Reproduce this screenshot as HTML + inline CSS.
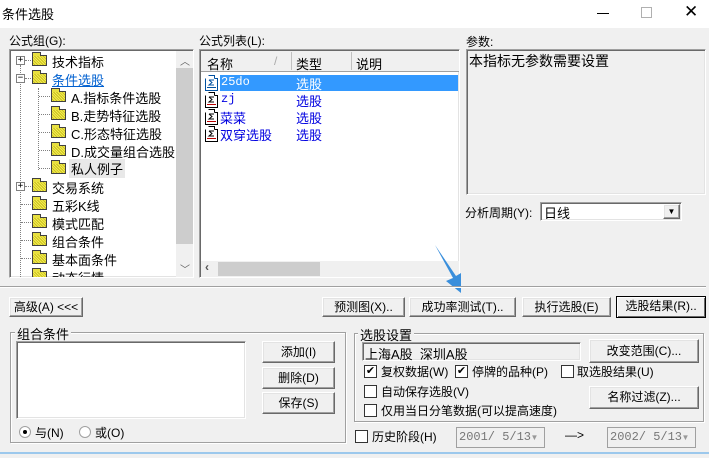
<!DOCTYPE html><html><head><meta charset="utf-8"><style>
*{box-sizing:border-box;margin:0;padding:0}
body{width:709px;height:458px;background:#f0f0f0;position:relative;overflow:hidden;font-family:"Liberation Sans","Noto Sans CJK SC","WenQuanYi Zen Hei",sans-serif;font-size:12px;color:#000}
.a{position:absolute;white-space:nowrap}
.sunk{position:absolute;background:#fff;border:1px solid;border-color:#a0a0a0 #fff #fff #a0a0a0;box-shadow:inset 1px 1px 0 #696969,inset -1px -1px 0 #e3e3e3}
.btn{position:absolute;background:#f0f0f0;border:1px solid;border-color:#fff #696969 #696969 #fff;box-shadow:inset -1px -1px 0 #a0a0a0,inset 1px 1px 0 #e3e3e3;text-align:center;font-size:12px;line-height:18px}
.grp{position:absolute;border:1px solid #a0a0a0;box-shadow:1px 1px 0 #fff inset,1px 1px 0 #fff}
.grp span{position:absolute;top:-9px;left:6px;background:#f0f0f0;padding:0 2px;font-size:13px}
.fold{position:absolute;width:15px;height:11px;border:1px solid #404040;background:#e8e040;background-image:repeating-linear-gradient(45deg,#f4ec50 0 1px,#c8c020 1px 2px)}
.fold:before{content:"";position:absolute;left:-1px;top:-4px;width:7px;height:3px;border:1px solid #404040;border-bottom:none;background:#e8e040}
.tree .t{position:absolute;font-size:13px}
.pm{position:absolute;width:9px;height:9px;border:1px solid #808080;background:#fff;font-size:9px;line-height:7px;text-align:center;font-family:"DejaVu Sans Mono",monospace}
.cb{position:absolute;width:13px;height:13px;border:1px solid #333;background:#fff;font-size:11px;line-height:11px;text-align:center}
svg.ic{position:absolute}
.blue{color:#0000e0}
.dl{position:absolute;border-left:1px dotted #808080}
.dh{position:absolute;border-top:1px dotted #808080}
</style></head><body>
<div class="a" style="left:0;top:0;width:709px;height:28px;background:#fff"></div>
<div class="a" style="left:2px;top:4px;font-size:13px">条件选股</div>
<div class="a" style="left:597px;top:13px;width:12px;height:1px;background:#000"></div>
<div class="a" style="left:641px;top:7px;width:11px;height:11px;border:1px solid #b0b0b0"></div>
<div class="a" style="left:684px;top:2px;font-size:17px;font-family:'DejaVu Sans';font-weight:200">✕</div>

<div class="a" style="left:9px;top:32px;font-size:12px">公式组(G):</div>
<div class="sunk tree" style="left:9px;top:49px;width:185px;height:229px;overflow:hidden">
 <div class="dl" style="left:10px;top:15px;height:220px"></div>
 <div class="dl" style="left:28px;top:38px;height:82px"></div>
 <div class="pm" style="left:6px;top:6px">+</div><div class="dh" style="left:15px;top:10px;width:6px"></div>
 <div class="fold" style="left:22px;top:5px"></div><div class="t" style="left:42px;top:2px">技术指标</div>
 <div class="pm" style="left:6px;top:24px">−</div><div class="dh" style="left:15px;top:28px;width:6px"></div>
 <div class="fold" style="left:22px;top:23px"></div><div class="t" style="left:42px;top:20px;color:#0060d0;text-decoration:underline">条件选股</div>
 <div class="dh" style="left:29px;top:46px;width:11px"></div><div class="fold" style="left:41px;top:41px"></div><div class="t" style="left:61px;top:38px">A.指标条件选股</div>
 <div class="dh" style="left:29px;top:64px;width:11px"></div><div class="fold" style="left:41px;top:59px"></div><div class="t" style="left:61px;top:56px">B.走势特征选股</div>
 <div class="dh" style="left:29px;top:82px;width:11px"></div><div class="fold" style="left:41px;top:77px"></div><div class="t" style="left:61px;top:74px">C.形态特征选股</div>
 <div class="dh" style="left:29px;top:100px;width:11px"></div><div class="fold" style="left:41px;top:95px"></div><div class="t" style="left:61px;top:92px">D.成交量组合选股</div>
 <div class="dh" style="left:29px;top:118px;width:11px"></div><div class="fold" style="left:41px;top:113px"></div><div class="t" style="left:59px;top:109px;background:#e8e8e8;padding:0 2px">私人例子</div>
 <div class="pm" style="left:6px;top:132px">+</div><div class="dh" style="left:15px;top:136px;width:6px"></div>
 <div class="fold" style="left:22px;top:131px"></div><div class="t" style="left:42px;top:128px">交易系统</div>
 <div class="dh" style="left:11px;top:154px;width:10px"></div><div class="fold" style="left:22px;top:149px"></div><div class="t" style="left:42px;top:146px">五彩K线</div>
 <div class="dh" style="left:11px;top:172px;width:10px"></div><div class="fold" style="left:22px;top:167px"></div><div class="t" style="left:42px;top:164px">模式匹配</div>
 <div class="dh" style="left:11px;top:190px;width:10px"></div><div class="fold" style="left:22px;top:185px"></div><div class="t" style="left:42px;top:182px">组合条件</div>
 <div class="dh" style="left:11px;top:208px;width:10px"></div><div class="fold" style="left:22px;top:203px"></div><div class="t" style="left:42px;top:200px">基本面条件</div>
 <div class="fold" style="left:22px;top:221px"></div><div class="t" style="left:42px;top:218px">动态行情</div>
 <div class="a" style="left:166px;top:1px;width:17px;height:226px;background:#f0f0f0"></div>
 <div class="a" style="left:166px;top:18px;width:17px;height:176px;background:#cdcdcd"></div>
 <div class="a" style="left:170px;top:3px;font-size:10px;color:#606060">︿</div>
 <div class="a" style="left:170px;top:211px;font-size:10px;color:#606060">﹀</div>
</div>

<div class="a" style="left:199px;top:32px">公式列表(L):</div>
<div class="sunk" style="left:199px;top:49px;width:261px;height:229px;overflow:hidden">
 <div class="a" style="left:1px;top:1px;width:258px;height:21px;background:#f0f0f0;border-bottom:1px solid #a0a0a0"></div>
 <div class="a" style="left:7px;top:4px;font-size:13px">名称</div>
 <div class="a" style="left:74px;top:4px;color:#aaa">/</div>
 <div class="a" style="left:91px;top:2px;width:1px;height:18px;background:#c0c0c0"></div>
 <div class="a" style="left:96px;top:4px;font-size:13px">类型</div>
 <div class="a" style="left:151px;top:2px;width:1px;height:18px;background:#c0c0c0"></div>
 <div class="a" style="left:156px;top:4px;font-size:13px">说明</div>
 <div class="a" style="left:20px;top:25px;width:238px;height:16px;background:#3399ff"></div>
 <svg class="ic" style="left:4px;top:25px" width="15" height="16"><path d="M4.5 0.5h6v3M1.5 3.5v12h12v-12h-3M5 5h5M5 5l3 2.5L5 10h5" fill="none" stroke="#0050a0"/><path d="M3 12.5h9" stroke="#0050a0"/></svg>
 <div class="a" style="left:21px;top:25px;color:#fff;font-family:'Liberation Mono';font-size:12px">25do</div>
 <div class="a" style="left:96px;top:24px;color:#fff;font-size:13px">选股</div>
 <svg class="ic" style="left:4px;top:42px" width="15" height="16"><path d="M4.5 0.5h6v3M1.5 3.5v12h12v-12h-3M5 5h5M5 5l3 2.5L5 10h5" fill="none" stroke="#000"/><path d="M3 12.5h9" stroke="#b00"/></svg>
 <div class="a blue" style="left:21px;top:42px;font-family:'Liberation Mono'">zj</div><div class="a blue" style="left:96px;top:41px;font-size:13px">选股</div>
 <svg class="ic" style="left:4px;top:59px" width="15" height="16"><path d="M4.5 0.5h6v3M1.5 3.5v12h12v-12h-3M5 5h5M5 5l3 2.5L5 10h5" fill="none" stroke="#000"/><path d="M3 12.5h9" stroke="#b00"/></svg>
 <div class="a blue" style="left:20px;top:58px;font-size:13px">菜菜</div><div class="a blue" style="left:96px;top:58px;font-size:13px">选股</div>
 <svg class="ic" style="left:4px;top:76px" width="15" height="16"><path d="M4.5 0.5h6v3M1.5 3.5v12h12v-12h-3M5 5h5M5 5l3 2.5L5 10h5" fill="none" stroke="#000"/><path d="M3 12.5h9" stroke="#b00"/></svg>
 <div class="a blue" style="left:20px;top:75px;font-size:13px">双穿选股</div><div class="a blue" style="left:96px;top:75px;font-size:13px">选股</div>
 <div class="a" style="left:1px;top:211px;width:258px;height:16px;background:#f0f0f0"></div>
 <div class="a" style="left:18px;top:212px;width:102px;height:14px;background:#cdcdcd"></div>
 <div class="a" style="left:5px;top:210px;color:#555;font-weight:bold">‹</div>
</div>

<div class="a" style="left:466px;top:33px">参数:</div>
<div class="sunk" style="left:466px;top:49px;width:240px;height:146px;background:#f0f0f0">
 <div class="a" style="left:2px;top:1px;font-size:14px">本指标无参数需要设置</div>
</div>
<div class="a" style="left:465px;top:204px">分析周期(Y):</div>
<div class="sunk" style="left:540px;top:202px;width:142px;height:19px">
 <div class="a" style="left:3px;top:0px;font-size:13px">日线</div>
 <div class="btn" style="left:122px;top:1px;width:17px;height:15px;font-size:8px;line-height:13px">▼</div>
</div>

<svg class="a" style="left:430px;top:242px" width="40" height="52"><path d="M5 3 L23 36 L16 39 L31 51 L31 31 L26 34 Z" fill="#3a8fdc"/></svg>
<div class="a" style="left:0;top:286px;width:706px;height:1px;background:#a0a0a0"></div>
<div class="a" style="left:0;top:287px;width:706px;height:1px;background:#fff"></div>

<div class="btn" style="left:9px;top:297px;width:74px;height:20px">高级(A) &lt;&lt;&lt;</div>
<div class="btn" style="left:322px;top:297px;width:83px;height:20px">预测图(X)..</div>
<div class="btn" style="left:409px;top:297px;width:107px;height:20px">成功率测试(T)..</div>
<div class="btn" style="left:522px;top:297px;width:89px;height:20px">执行选股(E)</div>
<div class="btn" style="left:616px;top:296px;width:90px;height:22px;border:1px solid #000;box-shadow:inset 1px 1px 0 #fff,inset -1px -1px 0 #696969">选股结果(R)..</div>

<div class="grp" style="left:10px;top:332px;width:336px;height:111px"><span style="left:4px">组合条件</span></div>
<div class="sunk" style="left:16px;top:341px;width:230px;height:78px"></div>
<div class="btn" style="left:262px;top:341px;width:73px;height:22px;line-height:20px">添加(I)</div>
<div class="btn" style="left:262px;top:367px;width:73px;height:22px;line-height:20px">删除(D)</div>
<div class="btn" style="left:262px;top:392px;width:73px;height:22px;line-height:20px">保存(S)</div>
<div class="a" style="left:19px;top:426px;width:12px;height:12px;border-radius:50%;background:#fff;border:1px solid #a0a0a0"></div>
<div class="a" style="left:23px;top:430px;width:4px;height:4px;border-radius:50%;background:#000"></div>
<div class="a" style="left:35px;top:424px">与(N)</div>
<div class="a" style="left:79px;top:426px;width:12px;height:12px;border-radius:50%;background:#fff;border:1px solid #a0a0a0"></div>
<div class="a" style="left:95px;top:424px">或(O)</div>

<div class="grp" style="left:354px;top:333px;width:350px;height:89px"><span style="left:3px">选股设置</span></div>
<div class="sunk" style="left:362px;top:342px;width:219px;height:19px;background:#f0f0f0"><div class="a" style="left:2px;top:1px;font-size:13px">上海A股&nbsp;&nbsp;深圳A股</div></div>
<div class="btn" style="left:589px;top:339px;width:110px;height:24px;line-height:22px">改变范围(C)...</div>
<div class="cb" style="left:364px;top:365px">✔</div><div class="a" style="left:381px;top:363px">复权数据(W)</div>
<div class="cb" style="left:455px;top:365px">✔</div><div class="a" style="left:472px;top:363px">停牌的品种(P)</div>
<div class="cb" style="left:561px;top:365px"></div><div class="a" style="left:577px;top:363px">取选股结果(U)</div>
<div class="cb" style="left:364px;top:385px"></div><div class="a" style="left:381px;top:383px">自动保存选股(V)</div>
<div class="btn" style="left:589px;top:386px;width:110px;height:23px;line-height:21px">名称过滤(Z)...</div>
<div class="cb" style="left:364px;top:404px"></div><div class="a" style="left:381px;top:402px">仅用当日分笔数据(可以提高速度)</div>

<div class="cb" style="left:355px;top:430px"></div><div class="a" style="left:372px;top:428px">历史阶段(H)</div>
<div class="a" style="left:456px;top:427px;width:89px;height:21px;border:1px solid #a0a0a0;background:#f0f0f0;color:#777;padding:2px 2px;font-family:'Liberation Mono';font-size:12px">2001/ 5/13</div>
<div class="a" style="left:526px;top:429px;width:17px;height:17px;color:#999;font-size:8px;text-align:center;line-height:17px">▼</div>
<div class="a" style="left:565px;top:428px">—&gt;</div>
<div class="a" style="left:607px;top:427px;width:89px;height:21px;border:1px solid #a0a0a0;background:#f0f0f0;color:#777;padding:2px 2px;font-family:'Liberation Mono';font-size:12px">2002/ 5/13</div>
<div class="a" style="left:677px;top:429px;width:17px;height:17px;color:#999;font-size:8px;text-align:center;line-height:17px">▼</div>
<div class="a" style="left:0;top:452px;width:709px;height:2px;background:#9cc8ec"></div>
</body></html>
